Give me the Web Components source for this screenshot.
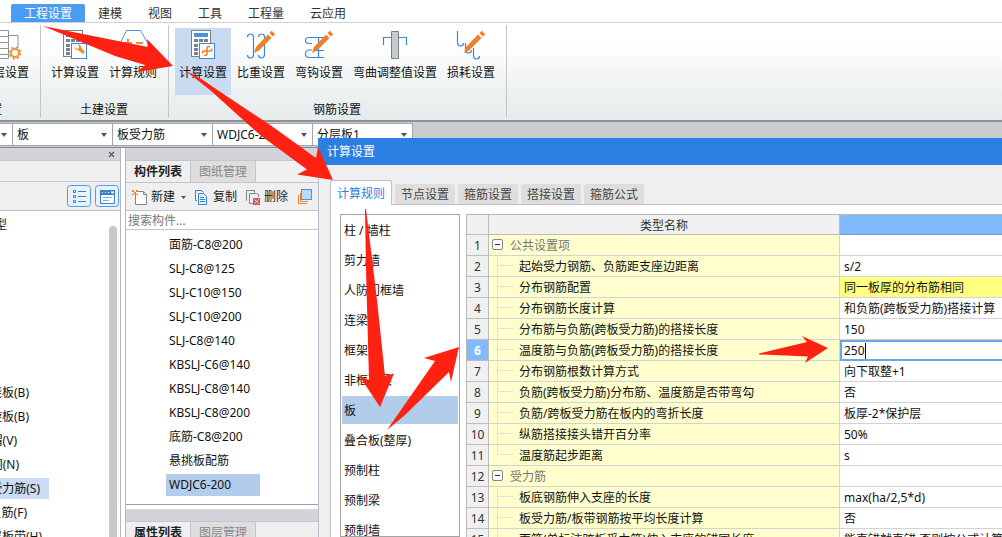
<!DOCTYPE html>
<html lang="zh-CN">
<head>
<meta charset="utf-8">
<title>计算设置</title>
<style>
html, body { margin: 0; height: 100%; overflow: hidden; }
body { font: 12px/16px "Noto Sans", "Noto Sans CJK SC", sans-serif; color: #111; background: #fff; }
</style>
</head>
<body>
<app-shell></app-shell>
<script>
// Setup runs on the detached copy, so nested elements have their attributes before they connect.
const define = (name, html, setup) => customElements.define(name, class extends HTMLElement {
  constructor() {
    super();
    this.attachShadow({ mode: 'open' });
  }
  connectedCallback() {
    if (this.shadowRoot.childNodes.length) return;
    const t = document.createElement('template');
    t.innerHTML = '<style>*{box-sizing:border-box}button,input,select{font:inherit;color:inherit;margin:0;padding:0;border:0;background:none;outline:0}svg{display:block}</style>' + html;
    if (setup) setup(this, t.content);
    this.shadowRoot.append(document.importNode(t.content, true));
  }
});

const calc = `<rect x="4.5" y="2.500" width="19" height="26" fill="#fff" stroke="#77838c"/><path d="M7 5h14v4H7z" fill="#4b92e6"/><path d="M7 11h4v3H7zM12 11h4v3h-4zM17 11h4v3h-4zM7 16h4v3H7zM7 20h4v3H7zM7 24h4v3H7z" fill="#77838c"/><rect x="12.500" y="15.500" width="15" height="15" fill="#fff" stroke="#3f8ae0"/>`;
const pencil = `<path d="M9 25l2-6L23 6.500l3.500 3.500L14 22.500z" fill="#f07f2a"/><path d="M24.500 5l2.200-2.200 3.500 3.500L28 8.500z" fill="#f07f2a"/>`;
const icons = {
  'calc-wrench': [32, 32, calc + `<path d="M15 19l3 2 2-1v-2l-2-1.500q4-.500 4 3l4 4.500-2 2-5-4q-3 0-4-3z" fill="#ee8d2f"/>`],
  'calc-rebar': [32, 32, calc + `<path d="M23 18.800q-3-1-3 1.200v5.500q0 2.500-3 1.700M15.700 25.500q-.700-2.500 1.300-2.500h6.500q1.800 0 1.300-2.500" fill="none" stroke="#f07f1a" stroke-width="1.500"/>`],
  'rule': [32, 32, `<path d="M9.500 2.500h14l8 14-8 14h-14l-7-14z" fill="#fff" stroke="#4b92e6"/><path d="M7 15h8M11 11v8M19 15h7" stroke="#ee8d2f" stroke-width="2"/><path d="M12 23l4 4M16 23l-4 4M20 24h6M20 27h6" stroke="#ee8d2f" stroke-width="1.500"/>`],
  'floor': [32, 32, `<path d="M5.500 2.500h14v28h-14zM5 8.500h15M5 14.500h15M5 20.500h15M5 26.500h15M20 7.500h9v14" fill="none" stroke="#8b959c"/><circle cx="26" cy="25" r="6" fill="#fff"/><circle cx="26" cy="25" r="4" fill="none" stroke="#e9963a" stroke-width="2"/><circle cx="26" cy="25" r="5.500" fill="none" stroke="#e9963a" stroke-width="2" stroke-dasharray="2.160"/>`],
  'weight': [32, 32, `<path d="M2.500 9q0-3 3-3t3 3v17q0 4-3 4t-3-3M13.500 9q0-3 3-3t3 3v17q0 4-3 4t-3-3" fill="none" stroke="#3d85d6" stroke-width="1.200"/>` + pencil],
  'hook': [32, 32, `<path d="M21 9.500H6q-3.500 0-3.500 3t3.500 3h3M15.500 10v19M21 29.500H6q-3.500 0-3.500-3.500t3.500-4h3M13 22.500h8" fill="none" stroke="#3d85d6" stroke-width="1.200"/>` + pencil],
  'bend': [32, 32, `<path d="M12.500 3.500h7v27h-7z" fill="#c5cbcf" stroke="#77838c"/><path d="M4.500 17V9.500h8M19.500 9.500h8V17" fill="none" stroke="#3d85d6" stroke-width="1.200"/>`],
  'loss': [32, 32, `<path d="M2.500 3v11q0 4 3 4t3-3M10.500 15v7q0 3 3 3t3-3M18.500 20v7q0 4 3 4t3-3" fill="none" stroke="#3d85d6" stroke-width="1.200"/>` + pencil],
  'list': [24, 22, `<rect x=".500" y=".500" width="23" height="21" rx="3" fill="#e9f3fe" stroke="#4a9cf0"/><path d="M6.500 5.500h2v2h-2zM6.500 10.500h2v2h-2zM6.500 15.500h2v2h-2z" fill="none" stroke="#3b80cc"/><path d="M11 6.500h8M11 11.500h8M11 16.500h8" stroke="#3b80cc"/>`],
  'window': [24, 22, `<rect x=".500" y=".500" width="23" height="21" rx="3" fill="#e9f3fe" stroke="#4a9cf0"/><path d="M5.500 5.500h14v13h-14z" fill="#fff" stroke="#3b80cc"/><path d="M5 5h15v5H5z" fill="#3b80cc"/><path d="M7 7.500h1M10 7.500h1M13 7.500h1M16 7h3l-1.500 1.500z" stroke="#fff" fill="#fff"/><path d="M8 12.500h9M8 15.500h6" stroke="#7db1ec"/>`],
  'new': [16, 16, `<path d="M3.500 4.500V15.500h11V5.500l-3-3h-6" fill="#fff" stroke="#7d878e"/><path d="M11.500 2.500v3h3" fill="none" stroke="#7d878e"/><path d="M0 1h2v2h2V1h2v2H4v2h2v1H4V5H2v1H0V5h2V3H0z" fill="#f08a1c"/>`],
  'copy': [16, 16, `<path d="M3 11.500H1.500v-10h6l2 2" fill="none" stroke="#3b80cc"/><path d="M4.500 4.500h5l3 3v8h-8z" fill="#e4f1fe" stroke="#3b80cc"/><path d="M6 8.500h4M6 10.500h5M6 12.500h5" stroke="#3b80cc"/>`],
  'delete': [16, 16, `<path d="M2 11.500H1.500v-10h8v2M13.500 8V5.500l-2-1h-7v10H8" fill="none" stroke="#7d878e"/><path d="M8 9h7v7H8z" fill="#d45656"/><path d="M9.500 10.500l4 4M13.500 10.500l-4 4" stroke="#fff"/>`],
  'layers': [16, 16, `<path d="M2.500 6v8.500H11M4.500 4v8.500H12" fill="none" stroke="#ee8232"/><rect x="5.500" y=".500" width="10" height="10" fill="#b8dafd" stroke="#4b92e6"/>`]
};
define('app-icon', '<style>:host{display:block;flex:none}</style><div></div>', (el, root) => {
  const [w, h, body] = icons[el.getAttribute('name')];
  root.querySelector('div').innerHTML = `<svg width="${w}" height="${h}" viewBox="0 0 ${w} ${h}" aria-hidden="true">${body}</svg>`;
});

define('ribbon-tab', `<style>:host{display:block}
button{display:block;height:18px;padding:2px 13px 0;line-height:16px;color:#333}
:host([active]) button{background:#4b9cf3;color:#fff;border-radius:2px 2px 0 0}</style><button role="tab"><slot></slot></button>`);

define('ribbon-button', `<style>:host{display:block}
button{display:flex;flex-direction:column;align-items:center;width:100%;height:67px;padding:0 4px;white-space:nowrap}
span{margin-top:5px}
:host([active]) button{background:#c9daf1}</style><button><app-icon></app-icon><span><slot></slot></span></button>`,
  (el, root) => root.querySelector('app-icon').setAttribute('name', el.getAttribute('icon')));

define('ribbon-group', `<style>:host{display:flex;flex-direction:column;flex:none;padding:3px 7px 0 6px;border-right:1px solid #c3c6c9}
.row{display:flex;gap:2px}
:host([cut]) {width:41px;align-items:flex-end;overflow:hidden}
.label{margin-top:6px;line-height:17px;text-align:center;white-space:nowrap}
:host([cut]) .label{margin-right:31px}</style><div class="row"><slot></slot></div><div class="label"></div>`,
  (el, root) => root.querySelector('.label').textContent = el.getAttribute('label'));

define('combo-box', `<style>:host{display:block;position:relative;flex:none;width:100px;height:23px;background:#fff;border:1px solid #a3a5a9;border-left:0}
:host([narrow]){width:13px}
select{appearance:none;display:block;width:100%;height:21px;line-height:20px;padding-left:4px;border-radius:0}
svg{position:absolute;right:5px;top:9px;pointer-events:none}</style>
<select></select><svg width="6" height="4" viewBox="0 0 6 4"><path d="M0 0h6L3 4z" fill="#555"/></svg>`,
  (el, root) => {
    const s = root.querySelector('select');
    s.setAttribute('aria-label', el.getAttribute('label'));
    s.innerHTML = `<option>${el.getAttribute('value') || ''}</option>`;
  });

define('tool-button', `<style>:host{display:block;flex:none}button{display:flex;align-items:center;gap:3px;height:26px;color:#222}svg{margin-left:3px}</style>
<button><app-icon></app-icon><slot></slot></button>`, (el, root) => {
  root.querySelector('app-icon').setAttribute('name', el.getAttribute('icon'));
  if (el.hasAttribute('label')) root.querySelector('button').setAttribute('aria-label', el.getAttribute('label'));
  if (el.hasAttribute('menu')) root.querySelector('button').insertAdjacentHTML('beforeend', '<svg width="5" height="3" viewBox="0 0 5 3"><path d="M0 0h5L2.500 3z" fill="#555"/></svg>');
});

define('module-panel', `<style>:host{display:flex;flex-direction:column;flex:none;width:121px;overflow:hidden;border-right:1px solid #b3b6c4}
.strip{height:12px;flex:none;background:#d3d4da;display:flex;justify-content:flex-end;padding-right:5px}
.head{height:22px;flex:none;background:#efefef;border:solid #c3c5d0;border-width:1px 0}
.tools{height:29px;flex:none;background:#efefef;border-bottom:1px solid #b9bcc9;display:flex;justify-content:flex-end;gap:4px;padding:1px}
.body{flex:1;min-height:0;display:flex;justify-content:space-between}
.bar{width:8px;flex:none;margin:15px 3px 0 0;background:#c8c8c8;border-radius:4px 4px 0 0}
ul{list-style:none;margin:0;padding:1px 0 0;width:49px}
li{height:24px;line-height:24px;display:flex;justify-content:flex-end;white-space:nowrap}
li.top{margin-bottom:145px;padding-right:42px;line-height:26px}
li.b{padding-right:20px}li.v{padding-right:32px}li.n{padding-right:30px}li.s{padding-right:9px;height:21px;line-height:21px;margin:1px 0 2px;background:#cbdcf4}li.f{padding-right:22px}li.h{padding-right:7px}</style>
<div class="strip"><button aria-label="关闭"><svg width="7" height="7" viewBox="0 0 7 7"><path d="M1 1l5 5M6 1L1 6" stroke="#555" stroke-width="1.200"/></svg></button></div>
<div class="head"></div>
<div class="tools"><tool-button icon="list" label="列表"></tool-button><tool-button icon="window" label="视图"></tool-button></div>
<div class="body"><ul><li class="top">型</li><li class="b">浇板(B)</li><li class="b">旋板(B)</li><li class="v">帽(V)</li><li class="n">洞(N)</li><li class="s">受力筋(S)</li><li class="f">负筋(F)</li><li class="h">层板带(H)</li></ul><div class="bar"></div></div>`);

define('panel-tabs', `<style>:host{display:flex;flex:none;height:23px;background:#efefef;border:solid #c3c5d0;border-width:1px 0}
button{width:65px;border-right:1px solid #c3c5d0;background:#dedede;color:#888;line-height:21px}
button:first-of-type{background:#efefef;color:#222;font-weight:bold}</style>
<button role="tab"></button><button role="tab"></button>`, (el, root) => {
  const b = root.querySelectorAll('button');
  el.getAttribute('labels').split(',').forEach((t, i) => b[i].textContent = t);
});

define('component-panel', `<style>:host{display:flex;flex-direction:column;flex:1;min-width:0;margin-left:4px;border-left:1px solid #b3b6c4}
.strip{height:12px;flex:none;background:#d3d4da}
.tools{display:flex;gap:8px;flex:none;height:28px;padding:1px 0 0 6px;background:#efefef;border-bottom:1px solid #c3c5d0}
input{flex:none;width:100%;height:19px;padding:0 2px;border-bottom:1px solid #c3c5d0}
input::placeholder{color:#777;opacity:1}
ul{list-style:none;margin:0;padding:4px 0 0 40px;flex:1;min-height:0;overflow:hidden;border-bottom:1px solid #9c9ea3}
li{width:94px;height:22px;line-height:22px;margin-bottom:2px;padding-left:3px;white-space:nowrap}
li.on{background:#b2ccec}
.foot{flex:none;height:32px;padding-top:4px;overflow:hidden}</style>
<div class="strip"></div><panel-tabs labels="构件列表,图纸管理"></panel-tabs>
<div class="tools"><tool-button icon="new" menu>新建</tool-button><tool-button icon="copy">复制</tool-button><tool-button icon="delete">删除</tool-button><tool-button icon="layers" label="层间复制"></tool-button></div>
<input type="text" placeholder="搜索构件..." aria-label="搜索构件">
<ul></ul><div class="foot"><div class="strip"></div><panel-tabs labels="属性列表,图层管理"></panel-tabs></div>`, (el, root) => {
  root.querySelector('ul').innerHTML = ['面筋-C8@200','SLJ-C8@125','SLJ-C10@150','SLJ-C10@200','SLJ-C8@140','KBSLJ-C6@140','KBSLJ-C8@140','KBSLJ-C8@200','底筋-C8@200','悬挑板配筋','WDJC6-200']
    .map(t => `<li${t === 'WDJC6-200' ? ' class="on"' : ''}>${t}</li>`).join('');
});

define('category-list', `<style>:host{display:block;flex:none;width:120px;border:1px solid #a3a3a3;background:#fff;overflow:hidden}
ul{list-style:none;margin:0;padding:0 1px}
li{height:28px;line-height:26px;margin:1px 0 2px;padding:2px 0 0 2px;white-space:nowrap}
li.on{background:#b2ccec}</style><ul role="listbox" aria-label="构件类型"></ul>`, (el, root) => {
  root.querySelector('ul').innerHTML = ['柱 / 墙柱','剪力墙','人防门框墙','连梁','框架梁','非框架梁','板','叠合板(整厚)','预制柱','预制梁','预制墙']
    .map(t => `<li role="option"${t === '板' ? ' class="on" aria-selected="true"' : ''}>${t}</li>`).join('');
});

define('rule-grid', `<style>:host{display:block;flex:1;min-width:0;overflow:hidden;border:solid #b9b9b9;border-width:1px 0 0 1px}
table{width:100%;border-collapse:separate;border-spacing:0;table-layout:fixed}
col.n{width:22px}col.t{width:351px}
th,td{height:21px;padding:0;border:solid #d3d3d3;border-width:0 1px 1px 0;line-height:18px;white-space:nowrap;overflow:hidden;text-align:left;font-weight:normal}
th,.val{padding-top:2px}
thead th{height:20px;line-height:17px;background:#f0f0f0;border-color:#bcbcbc;text-align:center;color:#333}
thead th:last-child{background:#80bafa;border-color:#62a4e9;border-right:0}
tbody th{background:#f0f0f0;border-color:#bcbcbc;text-align:center;color:#333}
.edit th{background:#80bafa;color:#fff;font-weight:bold}
.name{background:#ffffcd}
.name div{display:flex;height:20px;padding:2px 0 0 30px;background:linear-gradient(#e2e2da,#e2e2da) 8px 9px/16px 1px no-repeat,linear-gradient(#e2e2da,#e2e2da) 8px 0/1px 20px no-repeat}
.name .last{background:linear-gradient(#e2e2da,#e2e2da) 8px 9px/16px 1px no-repeat,linear-gradient(#e2e2da,#e2e2da) 8px 0/1px 10px no-repeat}
.group .name div{padding-left:3px;gap:7px;background:none;color:#777}
.group button{width:11px;height:11px;margin-top:2px;border:1px solid #888;border-radius:2px;background:#fff;display:grid;place-items:center}
.group i{width:5px;height:1px;background:#333}
.val{padding-left:4px;border-right:0}
.hot{background:#ffff80}
.edit .val{padding:0 0 0 2px;border:2px solid #68a7e6;border-right:0;background:#fff}
.field{display:flex;align-items:center;height:17px}
input{field-sizing:content;height:17px;line-height:17px}
.caret{width:1px;height:16px;background:#000}</style>
<table><colgroup><col class="n"><col class="t"><col></colgroup><thead><tr><th></th><th scope="col">类型名称</th><th></th></tr></thead><tbody></tbody></table>`, (el, root) => {
  const rows = [['公共设置项'],['起始受力钢筋、负筋距支座边距离','s/2'],['分布钢筋配置','同一板厚的分布筋相同'],['分布钢筋长度计算','和负筋(跨板受力筋)搭接计算'],['分布筋与负筋(跨板受力筋)的搭接长度','150'],['温度筋与负筋(跨板受力筋)的搭接长度','250'],['分布钢筋根数计算方式','向下取整+1'],['负筋(跨板受力筋)分布筋、温度筋是否带弯勾','否'],['负筋/跨板受力筋在板内的弯折长度','板厚-2*保护层'],['纵筋搭接接头错开百分率','50%'],['温度筋起步距离','s'],['受力筋'],['板底钢筋伸入支座的长度','max(ha/2,5*d)'],['板受力筋/板带钢筋按平均长度计算','否'],['面筋(单标注跨板受力筋)伸入支座的锚固长度','能直锚就直锚,否则按公式计算']];
  root.querySelector('tbody').innerHTML = rows.map(([name, value], i) => {
    const group = value === undefined, edit = i === 5;
    const last = rows[i + 1] && rows[i + 1].length === 1;
    const cell = edit ? `<div class="field"><input type="text" value="${value}" aria-label="${name}"><span class="caret"></span></div>` : value || '';
    return `<tr class="${group ? 'group' : edit ? 'edit' : ''}"><th scope="row">${i + 1}</th><td class="name"><div class="${last ? 'last' : ''}">${group ? '<button aria-label="折叠"><i></i></button>' : ''}${name}</div></td><td class="val${i === 2 ? ' hot' : ''}">${cell}</td></tr>`;
  }).join('');
});

define('settings-dialog', `<style>:host{display:flex;flex-direction:column;background:#efefef;overflow:hidden}
header{flex:none;height:27px;line-height:27px;padding-left:9px;background:#2b7fe0;color:#fff}
.in{flex:1;min-height:0;display:flex;flex-direction:column;padding:15px 0 0 11px;border-left:1px solid #b9bfd0}
nav{flex:none;display:flex;align-items:flex-end;gap:3px;height:25px;box-shadow:inset 0 -1px #bfc1c8}
nav button{width:60px;height:20px;margin-bottom:1px;padding-top:2px;background:#dedede;border-radius:3px 3px 0 0;line-height:18px;color:#444}
nav .on{width:62px;height:25px;margin:0;background:#fff;color:#2b7fe0;border:1px solid #bfc1c8;border-bottom:0;line-height:22px}
.page{flex:1;min-height:0;display:flex;gap:6px;padding:9px 0 0 9px;background:#fff;border-left:1px solid #bfc1c8}</style>
<header>计算设置</header><div class="in"><nav role="tablist"><button role="tab" class="on">计算规则</button><button role="tab">节点设置</button><button role="tab">箍筋设置</button><button role="tab">搭接设置</button><button role="tab">箍筋公式</button></nav>
<div class="page"><category-list></category-list><rule-grid></rule-grid></div></div>`);

define('guide-arrows', `<style>:host{display:block;pointer-events:none}</style>
<svg width="1002" height="537" viewBox="0 0 1002 537" fill="#ff2213" aria-hidden="true">
<path d="M43 26L148 47L147 39L173 66L137 72L145 65L115 56Z"/>
<path d="M186 71Q198 76 213 87L273 127L316 158L318 147L333 180L297 174.500L307 169.500L260 135L210 90Z"/>
<path d="M365 209L366 209L377 300L385 376L394 373.500L380 407L359 375.500L369 380L366 270Z"/>
<path d="M387 430L435 361L424 358L459 347L451 382L449 372L405 415Z"/>
<path d="M759 353.500L807 342L802 336L828 348L805 363L808 356.500L759 354.500Z"/></svg>`);

define('app-shell', `<style>:host{display:flex;flex-direction:column;position:relative;height:100vh;overflow:hidden}
.tabs{display:flex;flex:none;height:23px;padding:4px 0 0 11px;border-bottom:1px solid #cfd1d4}
.ribbon{display:flex;flex:none;height:99px;padding:2px 0 3px;background:linear-gradient(#fff 20%,#e5eaea);border-bottom:2px solid #8f9197}
.selects{display:flex;flex:none;height:26px;padding-top:1px;background:#c9cbd1;border-bottom:1px solid #85878d}
.work{display:flex;flex:1;min-height:0}
settings-dialog{position:absolute;left:318px;top:138px;right:0;bottom:0}
guide-arrows{position:absolute;left:0;top:0}</style>
<div class="tabs" role="tablist"><ribbon-tab active>工程设置</ribbon-tab><ribbon-tab>建模</ribbon-tab><ribbon-tab>视图</ribbon-tab><ribbon-tab>工具</ribbon-tab><ribbon-tab>工程量</ribbon-tab><ribbon-tab>云应用</ribbon-tab></div>
<div class="ribbon"><ribbon-group cut label="置"><ribbon-button icon="floor">楼层设置</ribbon-button></ribbon-group>
<ribbon-group label="土建设置"><ribbon-button icon="calc-wrench">计算设置</ribbon-button><ribbon-button icon="rule">计算规则</ribbon-button></ribbon-group>
<ribbon-group label="钢筋设置"><ribbon-button icon="calc-rebar" active>计算设置</ribbon-button><ribbon-button icon="weight">比重设置</ribbon-button><ribbon-button icon="hook">弯钩设置</ribbon-button><ribbon-button icon="bend">弯曲调整值设置</ribbon-button><ribbon-button icon="loss">损耗设置</ribbon-button></ribbon-group></div>
<div class="selects"><combo-box narrow label="楼层"></combo-box><combo-box label="构件大类" value="板"></combo-box><combo-box label="构件类型" value="板受力筋"></combo-box><combo-box label="构件" value="WDJC6-200"></combo-box><combo-box label="分层" value="分层板1"></combo-box></div>
<div class="work"><module-panel></module-panel><component-panel></component-panel></div>
<settings-dialog></settings-dialog><guide-arrows></guide-arrows>`);
</script>
</body>
</html>
